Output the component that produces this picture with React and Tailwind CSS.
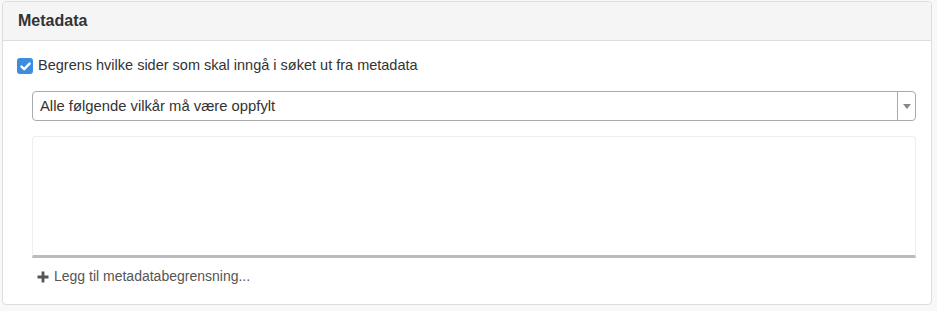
export default function App() {
  return (
    <div className="min-h-[311px] w-[937px] bg-[#f8f8f8] pl-[2px] pt-[1px]" style={{ fontFamily: '"Liberation Sans", Arial, sans-serif' }}>
      <div className="w-[930px] h-[304px] rounded-[4px] border border-[#dddddd] bg-white overflow-hidden">
        <div className="h-[39px] bg-[#f5f5f5] border-b border-[#dddddd] flex items-center pl-[15px]">
          <span className="text-[16px] font-bold text-[#333333]">Metadata</span>
        </div>
        <div className="pl-[14px] pr-[15px] pt-[17px]">
          <label className="flex items-center h-[16px]">
            <span className="w-[16px] h-[16px] rounded-[3px] bg-[#3c8dde] flex items-center justify-center">
              <svg width="11" height="9" viewBox="0 0 11 9">
                <path d="M1.5 4.6 L4.2 7.2 L9.6 1.6" fill="none" stroke="white" strokeWidth="2.4" strokeLinecap="round" strokeLinejoin="round" />
              </svg>
            </span>
            <span className="ml-[5px] text-[14.5px] text-[#333333]">Begrens hvilke sider som skal inngå i søket ut fra metadata</span>
          </label>
          <div className="ml-[15px] mt-[17px]">
            <div className="h-[30px] flex items-stretch border border-[#aaaaaa] rounded-[4px]">
              <div className="flex-1 flex items-center pl-[7px] text-[14.8px] text-[#333333]">Alle følgende vilkår må være oppfylt</div>
              <div className="w-[18px] border-l border-[#aaaaaa] flex items-center justify-center">
                <svg width="8" height="5" viewBox="0 0 8 5"><path d="M0 0 L8 0 L4 5 Z" fill="#888888" /></svg>
              </div>
            </div>
            <div className="mt-[15px] h-[122px] border border-[#eeeeee] rounded-t-[4px] border-b-[3px] border-b-[#bbbbbb]"></div>
            <div className="mt-[8px] flex items-center text-[14px] text-[#555555] pl-[5px]">
              <svg width="12" height="12" viewBox="0 0 12 12" className="mr-[5px]">
                <path d="M4.6 0.5 H7.4 V4.6 H11.5 V7.4 H7.4 V11.5 H4.6 V7.4 H0.5 V4.6 H4.6 Z" fill="#555555" />
              </svg>
              <span>Legg til metadatabegrensning...</span>
            </div>
          </div>
        </div>
      </div>
    </div>
  );
}
